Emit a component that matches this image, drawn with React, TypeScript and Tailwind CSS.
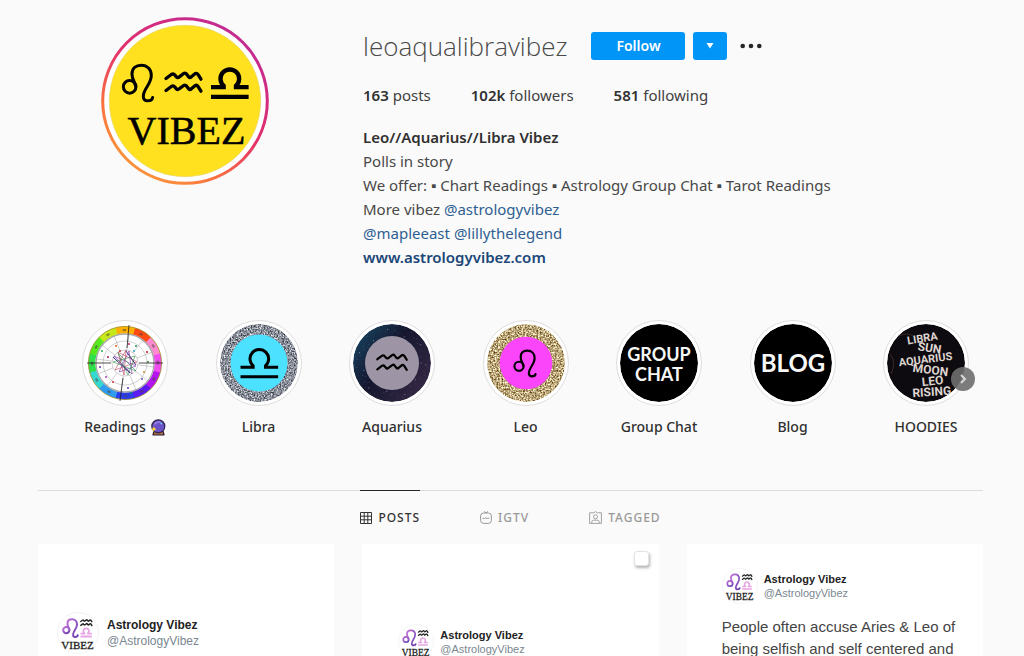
import React from 'react';

const LEO = 'M41 68 C38 54 30 46 30 32 C30 14 42 5 58 5 C76 5 88 18 88 36 C88 62 64 76 64 98 C64 108 70 112 77 112 C85 112 91 108 92 102';
const WAVE = 'M3 24 L19 12 Q25 8 29 13 L34 19 Q38 23 43 19 L56 9 Q61 6 65 11 L71 19 Q75 23 80 18 L91 9 Q96 7 100 13 L108 26';
const LIBRA = 'M0 56 H38 V52 A28 28 0 1 1 75 52 V56 H113 M0 85 H113';

type SignProps = { x: number; y: number; scale: number; color?: string; weight?: number };

const Leo = ({ x, y, scale, color = '#000', weight = 7 }: SignProps) => (
  <g transform={`translate(${x} ${y}) scale(${scale})`} fill="none" stroke={color} strokeWidth={weight} strokeLinecap="round">
    <circle cx="23" cy="70" r="19" />
    <path d={LEO} />
  </g>
);

const Aquarius = ({ x, y, scale, color = '#000', weight = 7 }: SignProps) => (
  <g transform={`translate(${x} ${y}) scale(${scale})`} fill="none" stroke={color} strokeWidth={weight} strokeLinecap="round" strokeLinejoin="round">
    <path d={WAVE} />
    <path d={WAVE} transform="translate(0 36)" />
  </g>
);

const Libra = ({ x, y, scale, color = '#000', weight = 10 }: SignProps) => (
  <g transform={`translate(${x} ${y}) scale(${scale})`} fill="none" stroke={color} strokeWidth={weight}>
    <path d={LIBRA} />
  </g>
);

const ProfilePicture = () => (
  <svg viewBox="0 0 168 168" className="w-[168px] h-[168px]" role="img" aria-label="leoaqualibravibez">
    <defs>
      <linearGradient id="ring" x1="0.25" y1="1" x2="0.85" y2="0.1">
        <stop offset="0" stopColor="#fa9a3c" />
        <stop offset="0.25" stopColor="#f9703f" />
        <stop offset="0.55" stopColor="#e2306b" />
        <stop offset="1" stopColor="#c32a92" />
      </linearGradient>
    </defs>
    <circle cx="84" cy="84" r="82.3" fill="#fff" stroke="url(#ring)" strokeWidth="3" />
    <circle cx="84" cy="84" r="75.7" fill="#ffe120" stroke="#e3d36a" strokeWidth="0.6" />
    <Leo x={21} y={46.5} scale={0.333} weight={9} />
    <Aquarius x={64} y={53.5} scale={0.333} weight={10} />
    <Libra x={110} y={51.5} scale={0.333} weight={13} />
    <text x="85.5" y="127" textAnchor="middle" fontSize="40" fontFamily="Liberation Serif, serif" stroke="#000" strokeWidth="0.5">VIBEZ</text>
  </svg>
);

const wheelColors = ['#ff4a12', '#ff8ad0', '#f04cf0', '#b414f0', '#5a1cf0', '#2b3cf0', '#2f9cf0', '#35d8d0', '#2fe04a', '#55e81c', '#c6e81a', '#ffb000'];
const planets = [
  [30, 22, '#e07020'], [43, 20, '#d03080'], [50, 22, '#30a060'], [22, 33, '#b03050'], [14, 43, '#7040b0'], [20, 53, '#b050c0'],
  [27, 58, '#d04040'], [42, 64, '#6040d0'], [45, 69, '#208080'], [58, 48, '#d09030'], [62, 38, '#308030'], [61, 28, '#d02020'],
  [48, 27, '#30b0d0'], [34, 27, '#c04040'], [16, 27, '#30b060'], [56, 55, '#6060d0'],
];

const ChartWheel = () => {
  const point = (angle: number, radius: number) => {
    const a = (angle * Math.PI) / 180;
    return `${(39 + radius * Math.cos(a)).toFixed(2)} ${(39 + radius * Math.sin(a)).toFixed(2)}`;
  };
  return (
    <g>
      <circle cx="39" cy="39" r="39" fill="#fff" />
      {wheelColors.map((color, i) => (
        <path key={color} d={`M${point(-75 + i * 30, 33)} A33 33 0 0 1 ${point(-44 + i * 30, 33)}`} fill="none" stroke={color} strokeWidth="7" />
      ))}
      {wheelColors.map((color, i) => (
        <path key={color} d={`M${point(-64 + i * 30, 33)} L${point(-58 + i * 30, 33)}`} stroke="#4b4440" strokeWidth="2.2" opacity="0.55" />
      ))}
      <g fill="none" stroke="#888" strokeWidth="0.4">
        <circle cx="39" cy="39" r="36.6" stroke="#9a8a20" strokeWidth="0.8" />
        <circle cx="39" cy="39" r="29" stroke="#aaa" strokeWidth="1.4" />
        <circle cx="39" cy="39" r="22" />
        <circle cx="39" cy="39" r="13" />
        {wheelColors.map((color, i) => (
          <path key={color} d={`M${point(i * 30 + 8, 13)} L${point(i * 30 + 8, 29)}`} />
        ))}
        <path d="M1 39 H25 M53 39 H77 M43 1 L41 24 M37 54 L34 77" stroke="#222" strokeWidth="0.8" />
      </g>
      <g fill="none" strokeWidth="0.6">
        <path d="M28 32 L50 42 L33 48 L43 27 L46 50 Z" stroke="#7a30a8" />
        <path d="M32 28 L51 38 L29 46 L40 26 L38 51 Z" stroke="#c04060" />
        <path d="M27 38 L49 32 L42 51 L32 29 L50 47 Z" stroke="#309050" />
        <path d="M40 27 L50 41 M27 33 L44 49" stroke="#403080" strokeWidth="1" />
      </g>
      {planets.map(([cx, cy, color]) => (
        <circle key={`${cx}-${cy}`} cx={cx} cy={cy} r="1.1" fill={color as string} />
      ))}
    </g>
  );
};

const LibraCover = () => (
  <g>
    <circle cx="39" cy="39" r="39" filter="url(#silver)" />
    <circle cx="39" cy="39" r="28.5" fill="#4be1ff" />
    <Libra x={20.5} y={24.5} scale={0.333} weight={9} />
  </g>
);

const AquariusCover = () => (
  <g>
    <circle cx="39" cy="39" r="39" fill="url(#night)" />
    {Array.from({ length: 60 }, (_, i) => (
      <circle
        key={i}
        cx={39 + (29 + ((i * 7) % 10)) * Math.cos(i * 2.4)}
        cy={39 + (29 + ((i * 7) % 10)) * Math.sin(i * 2.4)}
        r={i % 5 === 0 ? 0.6 : 0.35}
        fill="#a9bcdc"
        opacity="0.6"
      />
    ))}
    <circle cx="39" cy="39" r="27" fill="#9d95a5" />
    <Aquarius x={23.5} y={28.5} scale={0.28} weight={8} />
  </g>
);

const LeoCover = () => (
  <g>
    <circle cx="39" cy="39" r="39" filter="url(#gold)" />
    <circle cx="39" cy="39" r="26.3" fill="#fb45fa" />
    <Leo x={26.5} y={25.5} scale={0.24} weight={9} />
  </g>
);

const GroupChatCover = () => (
  <g fill="#f7f7f7" fontFamily="Lato, sans-serif" fontWeight="700" fontSize="18" textAnchor="middle">
    <circle cx="39" cy="39" r="39" fill="#000" />
    <text x="39" y="37">GROUP</text>
    <text x="39" y="57">CHAT</text>
  </g>
);

const BlogCover = () => (
  <g fill="#f7f7f7" fontFamily="Lato, sans-serif" fontWeight="700" fontSize="24" textAnchor="middle">
    <circle cx="39" cy="39" r="39" fill="#000" />
    <text x="39" y="48">BLOG</text>
  </g>
);

const HoodiesCover = () => (
  <g fill="#ded5d0" fontFamily="Roboto, sans-serif" fontWeight="700" textAnchor="middle">
    <circle cx="39" cy="39" r="39" fill="#0e0b10" />
    <path d="M3 30 Q10 38 4 50 M12 12 Q20 8 26 12" fill="none" stroke="#3d2a26" strokeWidth="1" />
    <text x="36" y="18" fontSize="11" transform="rotate(-9 36 18)">LIBRA</text>
    <text x="42" y="28" fontSize="12" transform="rotate(9 42 28)">SUN</text>
    <text x="39" y="39" fontSize="11" transform="rotate(-7 39 39)">AQUARIUS</text>
    <text x="43" y="50" fontSize="12" transform="rotate(7 43 50)">MOON</text>
    <text x="46" y="61" fontSize="12" transform="rotate(-6 46 61)">LEO</text>
    <text x="45" y="72" fontSize="12" transform="rotate(-4 45 72)">RISING</text>
  </g>
);

const CrystalBall = () => (
  <svg viewBox="0 0 16 17" className="w-4 h-[17px]" aria-hidden="true">
    <path d="M4 12 H13 L14 16 H3 Z" fill="#b0713f" stroke="#2b1c2c" strokeWidth="1.2" strokeLinejoin="round" />
    <circle cx="8.3" cy="7.3" r="6.5" fill="#6d53c8" stroke="#2f2350" strokeWidth="1.2" />
    <path d="M5 5 Q7 2.5 10 3" fill="none" stroke="#9d86e8" strokeWidth="1.4" strokeLinecap="round" />
    <circle cx="11.2" cy="4.6" r="1" fill="#6fc4f4" />
    <path d="M3.8 7.4 L4.7 9.3 L6.6 10.2 L4.7 11.1 L3.8 13 L2.9 11.1 L1 10.2 L2.9 9.3 Z" fill="#ffd83a" />
  </svg>
);

const highlights = [
  { name: 'Readings', cover: <ChartWheel />, emoji: <CrystalBall /> },
  { name: 'Libra', cover: <LibraCover /> },
  { name: 'Aquarius', cover: <AquariusCover /> },
  { name: 'Leo', cover: <LeoCover /> },
  { name: 'Group Chat', cover: <GroupChatCover /> },
  { name: 'Blog', cover: <BlogCover /> },
  { name: 'HOODIES', cover: <HoodiesCover /> },
];

const GridIcon = () => (
  <svg viewBox="0 0 12 12" className="w-3 h-3" fill="none" stroke="currentColor" aria-hidden="true">
    <path d="M0.5 0.5 H11.5 V11.5 H0.5 Z M0.5 4.2 H11.5 M0.5 7.8 H11.5 M4.2 0.5 V11.5 M7.8 0.5 V11.5" />
  </svg>
);

const IgtvIcon = () => (
  <svg viewBox="0 0 12 13" className="w-3 h-[13px]" fill="none" stroke="currentColor" aria-hidden="true">
    <rect x="0.6" y="2" width="10.8" height="10.4" rx="3" />
    <path d="M4.2 0.6 L6 1.8 L7.8 0.6 M3 7.4 H4.6 L5.6 6.6 L6.8 8 L7.6 7.2 H9" strokeLinecap="round" strokeLinejoin="round" />
  </svg>
);

const TaggedIcon = () => (
  <svg viewBox="0 0 13 13" className="w-[13px] h-[13px]" fill="none" stroke="currentColor" strokeWidth="0.9" aria-hidden="true">
    <path d="M0.6 1.8 H4.8 L6.5 0.6 L8.2 1.8 H12.4 V12.4 H0.6 Z" strokeLinejoin="round" />
    <circle cx="6.5" cy="5.8" r="2" />
    <path d="M2.8 12 V10.8 Q2.8 9.2 4.6 9.2 H8.4 Q10.2 9.2 10.2 10.8 V12" />
  </svg>
);

const PostAvatar = ({ className, id }: { className: string; id: string }) => (
  <svg viewBox="0 0 42 42" className={className} aria-hidden="true">
    <defs>
      <linearGradient id={id} x1="0" y1="0" x2="1" y2="1">
        <stop offset="0" stopColor="#c070d8" />
        <stop offset="1" stopColor="#6a3fb0" />
      </linearGradient>
    </defs>
    <circle cx="21" cy="21" r="20.5" fill="#fff" stroke="#ececec" strokeWidth="0.7" />
    <Leo x={5.5} y={6.5} scale={0.165} weight={12} color={`url(#${id})`} />
    <Aquarius x={23.5} y={7} scale={0.105} weight={14} color="#222" />
    <Libra x={23.5} y={16} scale={0.1} weight={18} color="#e6a4e4" />
    <text x="20.5" y="37" textAnchor="middle" fontSize="11" fill="#222" fontFamily="Liberation Serif, serif" stroke="#222" strokeWidth="0.3">VIBEZ</text>
  </svg>
);

const Profile = () => {
  return (
    <div className="h-screen overflow-hidden bg-[#fafafa] text-[#262626] font-['Noto_Sans','Open_Sans',sans-serif]">
      {/* Textures shared by the highlight covers */}
      <svg className="absolute w-0 h-0" aria-hidden="true">
        <defs>
          <filter id="silver" colorInterpolationFilters="sRGB">
            <feTurbulence type="fractalNoise" baseFrequency="0.7" numOctaves="2" seed="3" />
            <feColorMatrix values="1.3 0 0 0 -0.11  1.3 0 0 0 -0.09  1.3 0 0 0 -0.05  0 0 0 0 1" />
            <feComposite in2="SourceGraphic" operator="in" />
          </filter>
          <filter id="gold" colorInterpolationFilters="sRGB">
            <feTurbulence type="fractalNoise" baseFrequency="0.6" numOctaves="2" seed="8" />
            <feColorMatrix values="1.3 0 0 0 0.08  1.4 0 0 0 -0.05  1.5 0 0 0 -0.27  0 0 0 0 1" />
            <feComposite in2="SourceGraphic" operator="in" />
          </filter>
          <linearGradient id="night" x1="0" y1="0.2" x2="1" y2="0.9">
            <stop offset="0" stopColor="#17405e" />
            <stop offset="0.4" stopColor="#15172e" />
            <stop offset="1" stopColor="#3a2a48" />
          </linearGradient>
        </defs>
      </svg>

      <main className="pl-[38px] pr-[41px] pt-[17px]">
        {/* Profile Header */}
        <header className="flex gap-8">
          <div className="w-[293px] shrink-0 flex justify-center items-start">
            <ProfilePicture />
          </div>

          <section className="flex-1 min-w-0 pt-[11px]">
            <div className="flex items-center h-9">
              <h1 className="text-[26px] leading-9 font-light font-['Open_Sans',sans-serif] text-[#4a4a4a]">leoaqualibravibez</h1>
              <button className="ml-6 w-[94px] h-7 rounded-[3px] bg-[#0095f6] text-white text-sm font-semibold">Follow</button>
              <button aria-label="Suggested accounts" className="ml-2 w-[34px] h-7 rounded-[3px] bg-[#0095f6] flex items-center justify-center">
                <svg viewBox="0 0 8 6" className="w-2 h-1.5" fill="#fff" aria-hidden="true">
                  <path d="M0.5 0 H7.5 L4 5.5 Z" />
                </svg>
              </button>
              <button aria-label="Options" className="ml-3 w-6 h-7 flex items-center justify-center">
                <svg viewBox="0 0 22 6" className="w-[22px] h-1.5" fill="#262626" aria-hidden="true">
                  <circle cx="2.7" cy="3" r="2.3" />
                  <circle cx="11" cy="3" r="2.3" />
                  <circle cx="19.3" cy="3" r="2.3" />
                </svg>
              </button>
            </div>

            <ul className="flex gap-10 mt-[19px] text-[15px] leading-6 text-[#404040]">
              <li><span className="font-semibold text-[#303030]">163</span> posts</li>
              <li><span className="font-semibold text-[#303030]">102k</span> followers</li>
              <li><span className="font-semibold text-[#303030]">581</span> following</li>
            </ul>

            <div className="mt-[18px] text-[15px] leading-6 text-[#484848]">
              <h2 className="font-semibold text-[#303030]">Leo//Aquarius//Libra Vibez</h2>
              <p>Polls in story</p>
              <p>We offer: ▪ Chart Readings ▪ Astrology Group Chat ▪ Tarot Readings</p>
              <p>More vibez <a href="#astrologyvibez" className="text-[#2f5f92]">@astrologyvibez</a></p>
              <p>
                <a href="#mapleeast" className="text-[#2f5f92]">@mapleeast</a>{' '}
                <a href="#lillythelegend" className="text-[#2f5f92]">@lillythelegend</a>
              </p>
              <a href="#site" className="font-semibold text-[#1a4778]">www.astrologyvibez.com</a>
            </div>
          </section>
        </header>

        {/* Story Highlights */}
        <section className="relative mt-[51px] pl-11 pr-3.5">
          <ul className="flex justify-between">
            {highlights.map((item) => (
              <li key={item.name} className="w-[86px]">
                <button className="w-full flex flex-col items-center gap-[9px]">
                  <span className="w-[86px] h-[86px] rounded-full border border-[#dedede] bg-white flex items-center justify-center">
                    <svg viewBox="0 0 78 78" className="w-[78px] h-[78px] rounded-full" aria-hidden="true">
                      {item.cover}
                    </svg>
                  </span>
                  <span className="flex items-center gap-1 text-sm leading-6 font-medium whitespace-nowrap text-[#303030]">
                    {item.name}
                    {item.emoji}
                  </span>
                </button>
              </li>
            ))}
          </ul>
          <button aria-label="Next" className="absolute right-2 top-[47px] w-6 h-6 rounded-full bg-[#6e6e6e]/90 flex items-center justify-center">
            <svg viewBox="0 0 8 10" className="w-2 h-2.5" fill="none" stroke="#d8d8d8" strokeWidth="2" aria-hidden="true">
              <path d="M2 1 L6 5 L2 9" />
            </svg>
          </button>
        </section>

        {/* Tabs */}
        <nav className="mt-[51px] border-t border-[#dbdbdb] flex justify-center gap-[60px] text-xs font-medium tracking-[1px] text-[#999]">
          <a href="#posts" className="-mt-px border-t border-[#262626] h-[54px] flex items-center gap-1.5 text-[#333]">
            <GridIcon />
            POSTS
          </a>
          <a href="#igtv" className="flex items-center gap-1.5">
            <IgtvIcon />
            IGTV
          </a>
          <a href="#tagged" className="flex items-center gap-1.5">
            <TaggedIcon />
            TAGGED
          </a>
        </nav>

        {/* Posts */}
        <section className="grid grid-cols-3 gap-7 font-['Liberation_Sans',sans-serif]">
          <article className="aspect-square bg-white pt-[68px] pl-[19px]">
            <div className="flex items-center gap-2">
              <PostAvatar id="leo-a" className="w-[42px] h-[42px]" />
              <div className="text-xs leading-4">
                <h3 className="font-bold text-[#222]">Astrology Vibez</h3>
                <p className="text-[#7b8790]">@AstrologyVibez</p>
              </div>
            </div>
          </article>

          <article className="relative aspect-square bg-white pt-20 pl-9">
            <span className="absolute top-[7px] right-2.5 w-[15px] h-[15px] rounded-[3px] bg-white border border-[#e4e4e4] shadow-[1px_2px_3px_rgba(0,0,0,0.3)]"></span>
            <div className="flex items-center gap-1.5">
              <PostAvatar id="leo-b" className="w-9 h-9" />
              <div className="text-[11px] leading-[14px]">
                <h3 className="font-bold text-[#222]">Astrology Vibez</h3>
                <p className="text-[#7b8790]">@AstrologyVibez</p>
              </div>
            </div>
          </article>

          <article className="aspect-square bg-white pt-6 pl-[35px]">
            <div className="flex items-center gap-1.5">
              <PostAvatar id="leo-c" className="w-9 h-9" />
              <div className="text-[11px] leading-[14px]">
                <h3 className="font-bold text-[#222]">Astrology Vibez</h3>
                <p className="text-[#7b8790]">@AstrologyVibez</p>
              </div>
            </div>
            <p className="mt-3 text-[15px] leading-[22px] text-[#444]">
              People often accuse Aries &amp; Leo of
              <br />
              being selfish and self centered and
            </p>
          </article>
        </section>
      </main>
    </div>
  );
};

export default Profile;
